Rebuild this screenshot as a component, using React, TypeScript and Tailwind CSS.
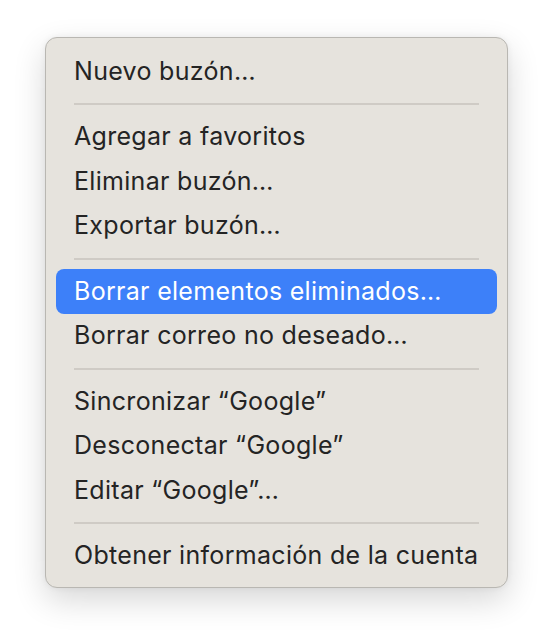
import React from 'react';

// Menu entries, null = separator
const items: (string | null)[] = [
  'Nuevo buzón…',
  null,
  'Agregar a favoritos',
  'Eliminar buzón…',
  'Exportar buzón…',
  null,
  'Borrar elementos eliminados…',
  'Borrar correo no deseado…',
  null,
  'Sincronizar “Google”',
  'Desconectar “Google”',
  'Editar “Google”…',
  null,
  'Obtener información de la cuenta',
];

const activeLabel = 'Borrar elementos eliminados…';

const App: React.FC = () => {
  return (
    <div className="min-h-[640px] w-[554px] bg-white pt-[37px] pl-[45px]">
      <div
        className="w-[463px] rounded-[12px] border border-[#b9b7b2] bg-[#e6e3dd] pt-[11px] pb-[9px] px-[10px] shadow-[0_12px_32px_rgba(0,0,0,0.16),0_0_6px_rgba(0,0,0,0.06)]"
        style={{ fontFamily: 'Inter, "Noto Sans", sans-serif' }}
      >
        {items.map((label, i) =>
          label === null ? (
            <div key={i} className="flex h-[21px] items-center px-[18px]">
              <div className="h-[2px] w-full bg-[#cfcbc5]" />
            </div>
          ) : (
            <div
              key={i}
              className={
                label === activeLabel
                  ? 'flex h-[44.5px] items-center rounded-[8px] bg-[#3d80f9] px-[18px] text-[25px] tracking-[0.3px] text-white'
                  : 'flex h-[44.5px] items-center px-[18px] text-[25px] tracking-[0.3px] text-[#242424]'
              }
            >
              {label}
            </div>
          )
        )}
      </div>
    </div>
  );
};

export default App;
